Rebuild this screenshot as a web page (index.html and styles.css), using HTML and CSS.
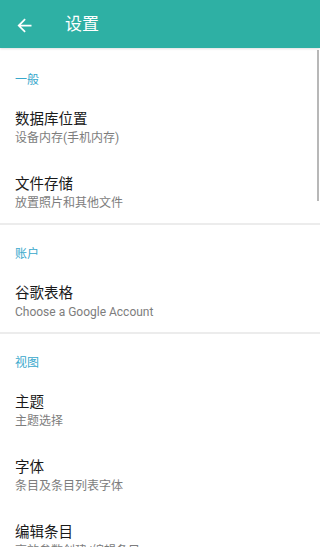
FILE: index.html
```html
<!DOCTYPE html>
<html lang="zh-CN">
<head>
    <meta charset="UTF-8">
    <title>设置</title>
    <link rel="stylesheet" href="styles.css">
</head>
<body>
<div class="page">
    <div class="toolbar">
        <a href="javascript:" class="back">
            <svg width="21" height="21" viewBox="0 0 24 24"><path d="M20 11H7.83l5.59-5.59L12 4l-8 8 8 8 1.41-1.41L7.83 13H20v-2z" fill="#fff"/></svg>
        </a>
        <h1 class="title">设置</h1>
    </div>

    <div class="list">
        <div class="section">
            <div class="section-title">一般</div>
            <div class="item">
                <div class="item-title">数据库位置</div>
                <div class="item-sub">设备内存(手机内存)</div>
            </div>
            <div class="item">
                <div class="item-title">文件存储</div>
                <div class="item-sub">放置照片和其他文件</div>
            </div>
        </div>

        <div class="section">
            <div class="section-title">账户</div>
            <div class="item">
                <div class="item-title">谷歌表格</div>
                <div class="item-sub">Choose a Google Account</div>
            </div>
        </div>

        <div class="section">
            <div class="section-title">视图</div>
            <div class="item">
                <div class="item-title">主题</div>
                <div class="item-sub">主题选择</div>
            </div>
            <div class="item">
                <div class="item-title">字体</div>
                <div class="item-sub">条目及条目列表字体</div>
            </div>
            <div class="item">
                <div class="item-title">编辑条目</div>
                <div class="item-sub">高效参数创建/编辑条目</div>
            </div>
        </div>

        <div class="scrollbar"></div>
    </div>
</div>
</body>
</html>
```

FILE: styles.css
```css
*{
    margin: 0;
    padding: 0;
    box-sizing: border-box;
}
a{
    text-decoration: none;
}
html, body{
    height: 100%;
    overflow: hidden;
    background: #fff;
}
body{
    font-family: Roboto, "Noto Sans CJK SC", sans-serif;
}
.page{
    width: 320px;
    height: 547px;
    overflow: hidden;
}
.toolbar{
    display: flex;
    align-items: center;
    height: 48px;
    background-color: #2eb0a4;
    box-shadow: 0 1px 2px rgba(0,0,0,0.12);
    position: relative;
    z-index: 2;
}
.toolbar .back{
    display: flex;
    width: 21px;
    height: 21px;
    margin-left: 14px;
    margin-top: 2px;
}
.toolbar .title{
    margin-left: 30px;
    color: #fff;
    font-size: 17px;
    font-weight: normal;
    line-height: 24px;
}
.list{
    position: relative;
    padding-top: 3px;
}
.section{
    padding-bottom: 3px;
    border-bottom: 2px solid #ececec;
}
.section-title{
    padding: 19px 15px 0 15px;
    line-height: 20px;
    font-size: 12px;
    color: #38a8cc;
}
.item{
    height: 65px;
    padding: 20px 15px 0 15px;
}
.item-title{
    font-size: 14.5px;
    line-height: 20px;
    color: #1a1a1a;
}
.item-sub{
    font-size: 12px;
    line-height: 16px;
    color: #7d7d7d;
}
.scrollbar{
    position: absolute;
    top: 2px;
    right: 1px;
    width: 2px;
    height: 151px;
    background-color: #b8b8b8;
}
```
